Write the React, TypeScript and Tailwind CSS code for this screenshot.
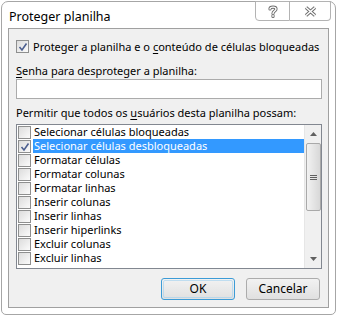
import React from "react";

const font = { fontFamily: '"Noto Sans", "Open Sans", sans-serif' };

function Check({ checked }: { checked?: boolean }) {
  return (
    <div className="relative w-[13px] h-[13px] shrink-0 border border-[#8e8f8f] bg-gradient-to-br from-[#dcdcdc] to-[#fbfbfb]">
      {checked && (
        <svg className="absolute left-[1px] top-[1px]" width="10" height="10" viewBox="0 0 10 10">
          <path d="M1.5 5 L4 8 L8.5 1.5" fill="none" stroke="#4c5f8f" strokeWidth="1.6" />
        </svg>
      )}
    </div>
  );
}

const items = [
  "Selecionar células bloqueadas",
  "Selecionar células desbloqueadas",
  "Formatar células",
  "Formatar colunas",
  "Formatar linhas",
  "Inserir colunas",
  "Inserir linhas",
  "Inserir hiperlinks",
  "Excluir colunas",
  "Excluir linhas",
];

export default function App() {
  return (
    <div className="w-[337px] h-[317px] bg-white overflow-hidden text-[#000]" style={font}>
      <div className="ml-[1px] mt-[1px] w-[335px] h-[314px] rounded-t-[7px] rounded-b-[5px] border border-[#a6a6a6] bg-white flex flex-col">
        {/* title bar */}
        <div className="h-[26px] flex flex-row justify-between shrink-0">
          <div className="pl-[7px] pt-[6px] text-[12.5px] leading-[17px] text-[#000] whitespace-nowrap">Proteger planilha</div>
          <div className="flex flex-row mr-[4px] h-[20px] -mt-[1px]">
            <div className="w-[35px] h-[20px] border border-[#b3b3b3] rounded-bl-[4px] flex items-center justify-center">
              <svg width="10" height="13" viewBox="0 0 10 13">
                <path d="M2 4 C2 1.5 8 1.5 8 4 C8 6 5 6 5 8.5 M5 10.5 L5 11.5" fill="none" stroke="#6d6d6d" strokeWidth="3.2" strokeLinecap="round" />
                <path d="M2 4 C2 1.5 8 1.5 8 4 C8 6 5 6 5 8.5 M5 10.5 L5 11.5" fill="none" stroke="#ffffff" strokeWidth="1.4" strokeLinecap="round" />
              </svg>
            </div>
            <div className="w-[41px] h-[20px] border border-l-0 border-[#b3b3b3] rounded-br-[4px] flex items-center justify-center">
              <svg width="13" height="11" viewBox="0 0 13 11">
                <path d="M2 1.5 L11 9.5 M11 1.5 L2 9.5" fill="none" stroke="#6d6d6d" strokeWidth="3.4" />
                <path d="M2 1.5 L11 9.5 M11 1.5 L2 9.5" fill="none" stroke="#ffffff" strokeWidth="1.5" />
              </svg>
            </div>
          </div>
        </div>
        {/* content panel */}
        <div className="mx-[6px] h-[280px] shrink-0 border border-[#a0a0a0] bg-[#f0f0f0] flex flex-col px-[7px] text-[11px]">
          <div className="mt-[11px] h-[13px] shrink-0 flex flex-row items-center gap-[4px] whitespace-nowrap">
            <Check checked />
            <span className="leading-[15px]">
              Proteger a planilha e o <span className="underline underline-offset-2">c</span>onteúdo de células bloqueadas
            </span>
          </div>
          <div className="mt-[10px] h-[15px] shrink-0 leading-[15px] whitespace-nowrap">
            <span className="underline underline-offset-2">S</span>enha para desproteger a planilha:
          </div>
          <div className="mt-[1px] h-[20px] shrink-0 w-[306px] border border-[#ababab] bg-white" />
          <div className="mt-[6px] h-[15px] shrink-0 leading-[15px] whitespace-nowrap">
            Permitir que todos os <span className="underline underline-offset-2">u</span>suários desta planilha possam:
          </div>
          <div className="mt-[4px] h-[145px] shrink-0 w-[306px] border border-[#828790] bg-white flex flex-row">
            <div className="flex-1 flex flex-col pl-[1px]">
              {items.map((t, i) => (
                <div key={t} className="h-[14px] shrink-0 flex flex-row items-center">
                  <Check checked={i === 1} />
                  <span
                    className={
                      "ml-[2px] pl-[1px] h-[14px] leading-[14px] whitespace-nowrap " +
                      (i === 1 ? "bg-[#3399ff] text-white flex-1" : "")
                    }
                  >
                    {t}
                  </span>
                </div>
              ))}
            </div>
            <div className="w-[17px] shrink-0 bg-[#f0f0f0] border-l border-[#e6e6e6] flex flex-col items-center">
              <div className="h-[18px] shrink-0 flex items-center justify-center">
                <svg width="7" height="4" viewBox="0 0 7 4"><path d="M0 4 L3.5 0 L7 4 Z" fill="#606060" /></svg>
              </div>
              <div className="w-[15px] h-[68px] shrink-0 rounded-[2px] border border-[#a9a9a9] bg-gradient-to-r from-[#f2f2f2] to-[#d8d8d8] flex flex-col items-center justify-center gap-[1px]">
                <div className="w-[7px] h-[1px] bg-[#606060]" />
                <div className="w-[7px] h-[1px] bg-[#606060]" />
                <div className="w-[7px] h-[1px] bg-[#606060]" />
              </div>
              <div className="flex-1" />
              <div className="h-[18px] shrink-0 flex items-center justify-center">
                <svg width="7" height="4" viewBox="0 0 7 4"><path d="M0 0 L3.5 4 L7 0 Z" fill="#606060" /></svg>
              </div>
            </div>
          </div>
          <div className="mt-[9px] shrink-0 flex flex-row justify-end gap-[11px] pr-[1px]">
            <div className="w-[74px] h-[22px] rounded-[3px] border border-[#3c9bd6] bg-gradient-to-b from-[#f2f2f2] to-[#e0e0e0] flex items-center justify-center leading-[14px] text-[12px]">
              <div className="w-[70px] h-[18px] rounded-[2px] border border-[#9fd0f0]/60 flex items-center justify-center">OK</div>
            </div>
            <div className="w-[74px] h-[22px] rounded-[3px] border border-[#acacac] bg-gradient-to-b from-[#f2f2f2] to-[#e0e0e0] flex items-center justify-center leading-[14px] text-[12px]">
              Cancelar
            </div>
          </div>
        </div>
      </div>
    </div>
  );
}
